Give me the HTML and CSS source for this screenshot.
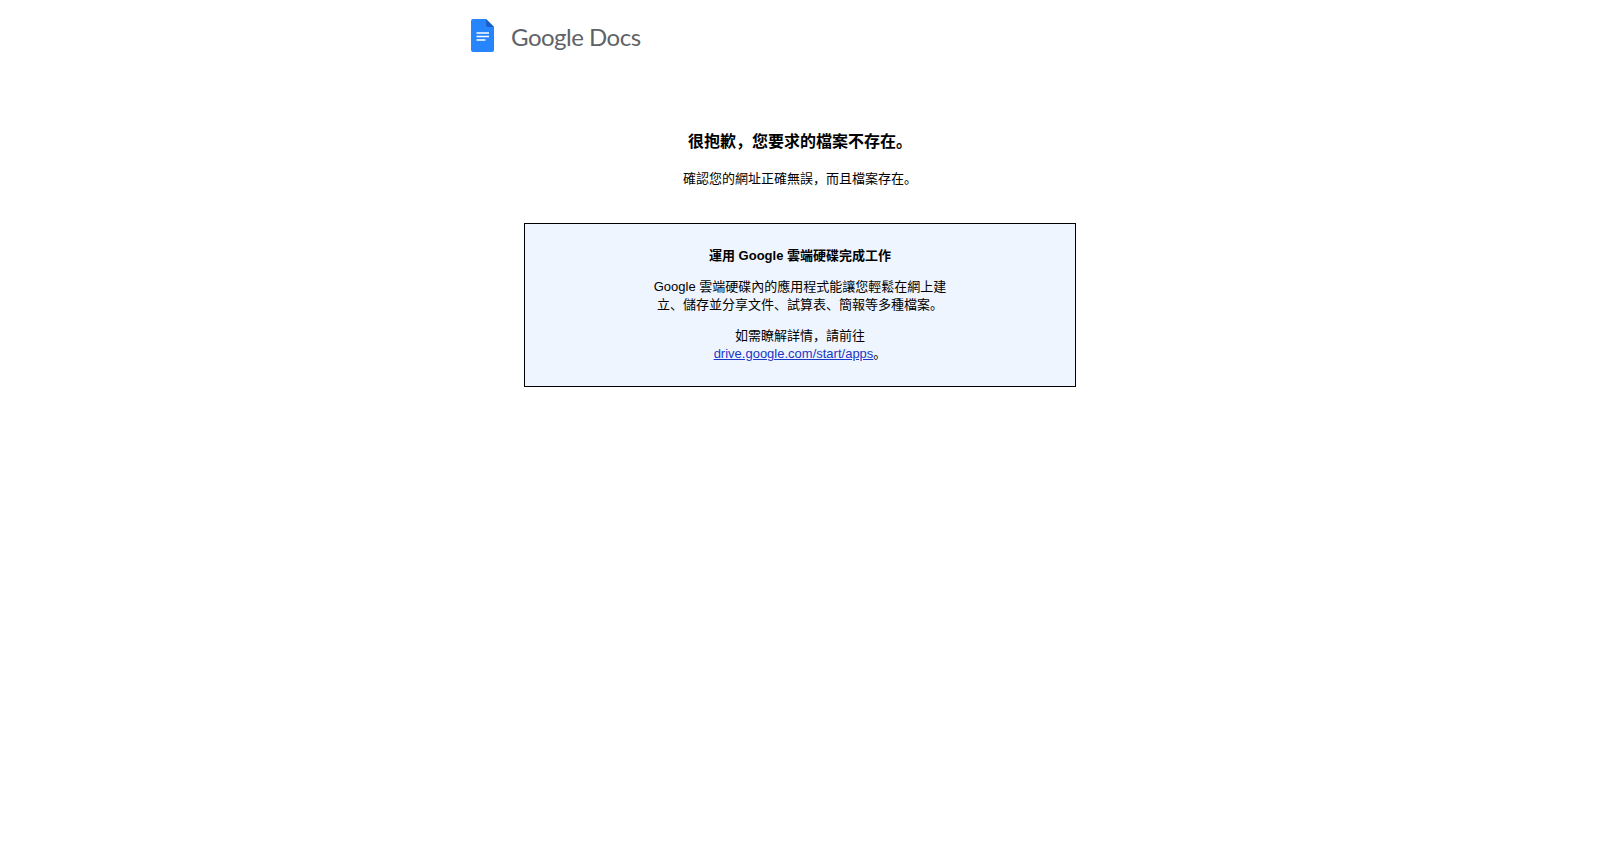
FILE: index.html
```html
<!DOCTYPE html>
<html lang="zh-TW">
<head>
  <meta charset="UTF-8" />
  <title>Google 文件 - 找不到檔案</title>
  <link rel="stylesheet" href="styles.css">
</head>
<body>
  <header class="logo">
    <svg class="logo-icon" width="23" height="33" viewBox="0 0 23 33">
      <path d="M2 0H15L23 8V31a2 2 0 0 1-2 2H2a2 2 0 0 1-2-2V2a2 2 0 0 1 2-2z" fill="#2684fc"/>
      <path d="M15 0L23 8H17a2 2 0 0 1-2-2z" fill="#1a5fc8"/>
      <path d="M5.500 14H18M5.500 17.500H18M5.500 21H14.500" stroke="#fff" stroke-width="1.600"/>
    </svg>
    <span class="logo-text">Google Docs</span>
  </header>

  <main class="content">
    <h1>很抱歉，您要求的檔案不存在。</h1>
    <p class="sub">確認您的網址正確無誤，而且檔案存在。</p>

    <section class="promo">
      <h2>運用 Google 雲端硬碟完成工作</h2>
      <p>Google 雲端硬碟內的應用程式能讓您輕鬆在網上建<br>立、儲存並分享文件、試算表、簡報等多種檔案。</p>
      <p>如需瞭解詳情，請前往<br><a href="#">drive.google.com/start/apps</a>。</p>
    </section>
  </main>
</body>
</html>
```

FILE: styles.css
```css
* {
  box-sizing: border-box;
}

body {
  margin: 0;
  background-color: #ffffff;
  color: #000000;
  font-family: "Liberation Sans", Arial, "Noto Sans CJK SC", sans-serif;
  font-feature-settings: "locl" 0;
  font-size: 13px;
}

.logo {
  display: flex;
  align-items: center;
  gap: 17px;
  width: 660px;
  height: 71px;
  margin: 0 auto;
  padding-left: 1px;
}

.logo-icon {
  flex-shrink: 0;
}

.logo-text {
  font-family: Lato, sans-serif;
  font-size: 24px;
  letter-spacing: -0.5px;
  color: #5f6368;
  white-space: nowrap;
  padding-top: 2px;
}

.content {
  text-align: center;
}

h1 {
  margin: 61px 0 0;
  font-size: 16px;
  line-height: 20px;
}

.sub {
  margin: 18px 0 0;
  line-height: 18px;
}

.promo {
  width: 552px;
  margin: 35px auto 0;
  padding: 23px 32px 23px;
  border: 1px solid #000000;
  background-color: #eff5ff;
}

h2 {
  margin: 0;
  font-size: 13px;
  line-height: 18px;
}

.promo p {
  margin: 13px 0 0;
  line-height: 18px;
}

.promo a {
  color: #1a37c7;
}
```
